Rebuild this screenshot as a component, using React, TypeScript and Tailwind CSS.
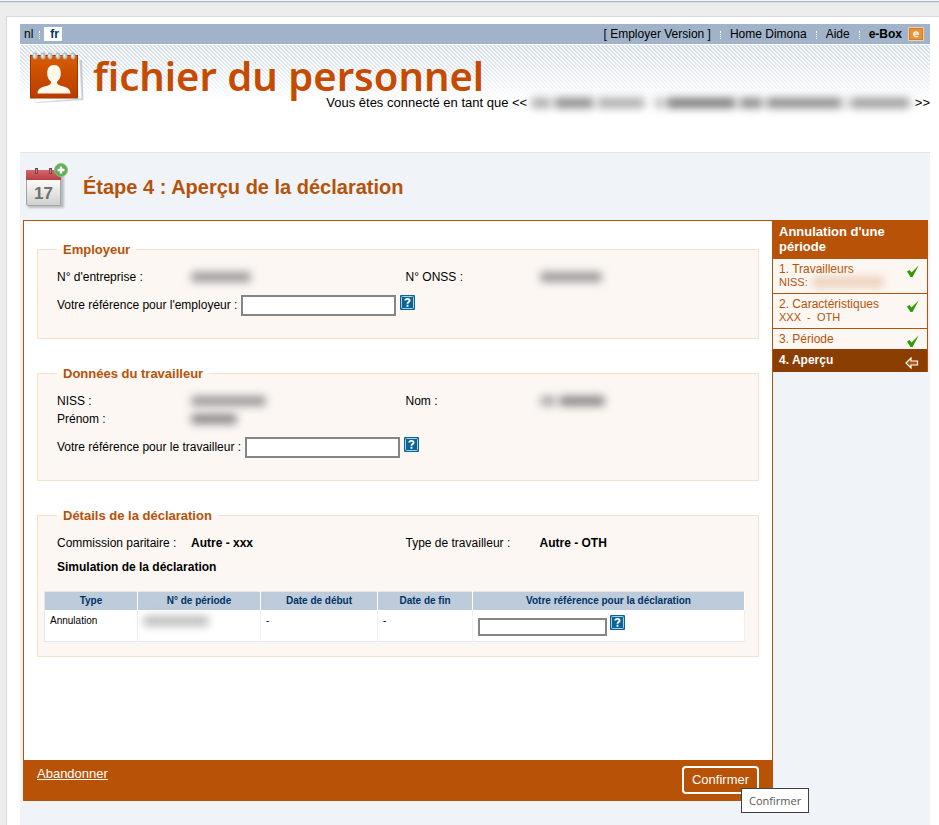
import { useId, type ReactNode } from "react";

const arial = "font-['Liberation_Sans',Arial,sans-serif]";

function Redacted({ words, className = "" }: { words: string[]; className?: string }) {
  return (
    <span aria-hidden="true" className={`flex items-center gap-[3px] ${className}`}>
      {words.map((word, i) => (
        <span key={i} className={`h-[10px] rounded-sm blur-[4px] ${word}`} />
      ))}
    </span>
  );
}

function HelpButton() {
  return (
    <button type="button" aria-label="Aide" className="block size-[15px] shrink-0 cursor-pointer">
      <svg viewBox="0 0 15 15" className="block size-[15px]">
        <rect width="15" height="15" rx="1" fill="#0a6496" />
        <rect x="1.5" y="1.5" width="12" height="12" rx="1" fill="none" stroke="#a9cfe2" />
        <path d="M5.300 5.600C5.300 3.300 9.800 3.200 9.600 5.600C9.500 7.100 7.600 7.100 7.500 8.800M7.500 9.800v1.900" fill="none" stroke="#fff" strokeWidth="1.900" />
      </svg>
    </button>
  );
}

function LogoIcon() {
  return (
    <svg viewBox="0 0 56 54" className="h-[54px] w-[56px] shrink-0" aria-hidden="true">
      <defs>
        <linearGradient id="pad" x1="0" y1="0" x2="0" y2="1">
          <stop offset="0" stopColor="#d65d00" />
          <stop offset="1" stopColor="#b93c00" />
        </linearGradient>
      </defs>
      <path d="M7 52L54.500 49L53 9L7 10z" fill="#a9afb4" opacity=".6" />
      <path d="M4 8H50.500L52.500 47.500L6 51.500z" fill="#fff" stroke="#dfe2e5" strokeWidth=".6" />
      <rect x="1.500" y="4.500" width="47" height="42.500" fill="url(#pad)" stroke="#a83200" />
      {[6, 14, 21, 29, 36, 44].map((x) => (
        <g key={x}>
          <ellipse cx={x} cy="5" rx="2.300" ry="3.200" fill="#c9c9c9" stroke="#999" strokeWidth=".6" />
          <path d={`M${x - 0.8} 3v3`} stroke="#f7f7f7" strokeWidth="1.200" />
        </g>
      ))}
      <path d="M25 14c-4.600 0-6.800 3.300-6.800 8c0 4.300 1.500 6.800 3.600 8.500c.6 1.500-.2 3-2.800 4C14.500 36 8.500 36.500 8.500 42.500h33C41.500 36.500 35.500 36 31 34.500c-2.600-1-3.400-2.500-2.800-4c2.100-1.700 3.600-4.200 3.600-8.500c0-4.700-2.200-8-6.800-8z" fill="#fff9ec" />
    </svg>
  );
}

function CalendarIcon() {
  return (
    <svg viewBox="0 0 46 50" className="h-[50px] w-[46px] shrink-0" aria-hidden="true">
      <defs>
        <linearGradient id="sheet" x1="0" y1="0" x2="0" y2="1">
          <stop offset="0.300" stopColor="#fbfaf5" />
          <stop offset="1" stopColor="#cfcfcf" />
        </linearGradient>
        <linearGradient id="band" x1="0" y1="0" x2="0" y2="1">
          <stop offset="0" stopColor="#d9666a" />
          <stop offset="1" stopColor="#b53f45" />
        </linearGradient>
        <filter id="soft">
          <feGaussianBlur stdDeviation="1.200" />
        </filter>
      </defs>
      <rect x="3" y="11" width="36" height="35" rx="1" fill="#7d858b" opacity=".5" filter="url(#soft)" />
      <rect x="1.500" y="8.500" width="34" height="35" rx="1" fill="url(#sheet)" stroke="#a3a3a3" />
      <rect x="1" y="8" width="35" height="10" fill="url(#band)" />
      <path d="M11.500 6v6M25.500 6v6" stroke="#7b4046" strokeWidth="3" />
      <path d="M11.500 7v4M25.500 7v4" stroke="#b08c90" />
      <text x="18.500" y="37" textAnchor="middle" fontFamily="Liberation Sans, sans-serif" fontWeight="bold" fontSize="17" fill="#6f6f6f">17</text>
      <circle cx="36" cy="8" r="6.500" fill="#5fae52" stroke="#8bc583" />
      <path d="M36 4.500v7M32.500 8h7" stroke="#fff" strokeWidth="2.400" />
    </svg>
  );
}

function Check() {
  return (
    <svg viewBox="0 0 14 14" className="mt-[2px] size-[14px] shrink-0" role="img" aria-label="Terminé">
      <path d="M1 7.500L3.500 6L5.500 8.500L12.800 1.200L6.500 13H4.500z" fill="#2f9b00" />
    </svg>
  );
}

function Section({ title, children }: { title: string; children: ReactNode }) {
  return (
    <fieldset className="min-w-0 border border-[#f8e1cb] bg-[#fcf7f3]">
      <legend className="ml-[19px] px-[6px] text-[13px] leading-[15px] font-bold text-[#b45309]">{title}</legend>
      {children}
    </fieldset>
  );
}

function Fields({ children }: { children: ReactNode }) {
  return (
    <dl className="grid grid-cols-[134px_1fr_134px_1fr] pt-[11px] pr-1 pl-[19px] leading-[18px]">{children}</dl>
  );
}

function ReferenceField({ label }: { label: string }) {
  const id = useId();
  return (
    <div className="mt-[9px] flex gap-1 pb-[22px] pl-[19px]">
      <label htmlFor={id} className="leading-[20px]">{label}</label>
      <input id={id} type="text" className="h-[21px] w-[155px] border-2 border-[#858585] bg-white px-1 outline-none" />
      <HelpButton />
    </div>
  );
}

function Divider() {
  return <span aria-hidden="true" className="mt-[2px] h-2 border-l border-dotted border-white" />;
}

export default function App() {
  return (
    <div className={`min-h-screen overflow-hidden bg-[#ededed] text-[12px] text-black ${arial}`}>
      <div className="h-4 border-t border-[#f5f8fa]">
        <div className="h-[2px] border-t border-[#a9b6c1] bg-[#dde2e0]" />
      </div>
      <div className="ml-[6px] flex min-h-[calc(100vh-16px)] flex-col border-t border-l border-[#d9d9d9] bg-white pt-[7px] pr-[9px] pl-[13px]">
        <header>
          <div className="flex h-5 items-center justify-between bg-[#a1b3c9] pr-[6px] pl-1">
            <nav aria-label="Langue" className="flex items-center leading-[14px]">
              <a href="#nl">nl</a>
              <span className="ml-[6px] flex"><Divider /></span>
              <a href="#fr" aria-current="true" className="ml-1 bg-white pr-[3px] pl-[6px] font-bold text-[#003366]">fr</a>
            </nav>
            <nav aria-label="Liens" className="flex items-center gap-[9px] leading-[14px]">
              <a href="#version">[ Employer Version ]</a>
              <Divider />
              <a href="#home">Home Dimona</a>
              <Divider />
              <a href="#aide">Aide</a>
              <Divider />
              <a href="#ebox" className="flex items-center gap-[6px] font-bold">
                e-Box
                <svg viewBox="0 0 16 14" className="h-[14px] w-4" aria-hidden="true">
                  <rect width="16" height="14" rx="1" fill="#f6cfa5" />
                  <rect x="1.500" y="1.500" width="13" height="11" fill="#e8923d" stroke="#d67c24" />
                  <path d="M5.800 7.200h4.500C10.300 4 5.800 4 5.800 7.200c0 2.900 3 2.900 4.300 1.800" fill="none" stroke="#fff" strokeWidth="1.300" />
                </svg>
              </a>
            </nav>
          </div>
          <div className="mt-px h-[107px] bg-[linear-gradient(to_bottom,transparent,white_56px)]">
            <div className="relative isolate">
              <div aria-hidden="true" className="absolute inset-x-0 top-0 -z-10 h-14 bg-[linear-gradient(45deg,#cfdae3_25%,#f8fafb_25%,#f8fafb_50%,#cfdae3_50%,#cfdae3_75%,#f8fafb_75%)] mask-[linear-gradient(to_bottom,black,transparent)] bg-size-[4px_4px]" />
              <div className="flex h-[50px] gap-2 pt-[6px] pl-[9px]">
                <LogoIcon />
                <h1 className="font-['Noto_Sans','Open_Sans',sans-serif] text-[40px] leading-[50px] font-semibold whitespace-nowrap text-[#c44b00]">fichier du personnel</h1>
              </div>
              <p className="flex justify-end text-[13px] leading-[16px]">
                <span className="whitespace-pre">Vous êtes connecté en tant que &lt;&lt; </span>
                <Redacted className="w-[384px]" words={["w-5 bg-[#aaa]", "w-10 bg-[#888]", "w-12 bg-[#aaa]", "w-1", "w-2 bg-[#aaa]", "w-[70px] bg-[#777]", "w-6 bg-[#888]", "w-[76px] bg-[#888]", "w-[2px] bg-[#aaa]", "w-[60px] bg-[#999]"]} />
                <span>&gt;&gt;</span>
              </p>
            </div>
          </div>
        </header>

        <main className="flex-1 border-t border-[#e2e6e9] bg-[#f0f4f8] pr-[2px] pb-6 pl-[3px]">
          <div className="flex h-[67px] items-center gap-3 pl-[2px]">
            <CalendarIcon />
            <h2 className="text-[20px] leading-[28px] font-bold text-[#b45309]">Étape 4 : Aperçu de la déclaration</h2>
          </div>

          <div className="flex items-start">
            <form className="min-w-0 flex-1 border border-[#b75206] bg-white" onSubmit={(e) => e.preventDefault()}>
              <div className="flex flex-col gap-[27px] px-[13px] pt-[21px] pb-[103px]">
                <Section title="Employeur">
                  <Fields>
                    <dt>N° d'entreprise :</dt>
                    <dd className="flex"><Redacted words={["w-[60px] bg-[#999]"]} /></dd>
                    <dt>N° ONSS :</dt>
                    <dd className="flex"><Redacted words={["w-[62px] bg-[#999]"]} /></dd>
                  </Fields>
                  <ReferenceField label="Votre référence pour l'employeur :" />
                </Section>

                <Section title="Données du travailleur">
                  <Fields>
                    <dt>NISS :</dt>
                    <dd className="flex"><Redacted words={["w-[75px] bg-[#999]"]} /></dd>
                    <dt>Nom :</dt>
                    <dd className="flex"><Redacted words={["w-4 bg-[#aaa]", "w-[46px] bg-[#888]"]} /></dd>
                    <dt>Prénom :</dt>
                    <dd className="flex"><Redacted words={["w-[46px] bg-[#888]"]} /></dd>
                  </Fields>
                  <ReferenceField label="Votre référence pour le travailleur :" />
                </Section>

                <Section title="Détails de la déclaration">
                  <Fields>
                    <dt>Commission paritaire :</dt>
                    <dd className="font-bold">Autre - xxx</dd>
                    <dt>Type de travailleur :</dt>
                    <dd className="font-bold">Autre - OTH</dd>
                  </Fields>
                  <h3 className="mt-[6px] pl-[19px] leading-[18px] font-bold">Simulation de la déclaration</h3>
                  <div className="mt-[15px] pr-[13px] pb-[14px] pl-[6px]">
                    <table className="w-full table-fixed border-collapse border border-[#e2e8ec] bg-white text-[10px]">
                      <colgroup>
                        <col className="w-[93px]" />
                        <col className="w-[123px]" />
                        <col className="w-[117px]" />
                        <col className="w-[95px]" />
                        <col />
                      </colgroup>
                      <thead>
                        <tr className="h-[18px] bg-[#becbda] text-[#003366]">
                          {["Type", "N° de période", "Date de début", "Date de fin", "Votre référence pour la déclaration"].map((t) => (
                            <th key={t} scope="col" className="border-r border-white p-0 leading-[15px] font-bold">{t}</th>
                          ))}
                        </tr>
                      </thead>
                      <tbody>
                        <tr className="h-8 align-top leading-[12px] *:border-r *:border-[#edf0f2] *:px-[5px] *:py-0 *:pt-[5px]">
                          <td>Annulation</td>
                          <td><Redacted className="h-3" words={["w-[66px] bg-[#bbb]"]} /></td>
                          <td>-</td>
                          <td>-</td>
                          <td>
                            <div className="flex gap-[3px]">
                              <input aria-label="Votre référence pour la déclaration" type="text" className="mt-[3px] h-[18px] w-[129px] border-2 border-[#858585] bg-white px-1 outline-none" />
                              <HelpButton />
                            </div>
                          </td>
                        </tr>
                      </tbody>
                    </table>
                  </div>
                </Section>
              </div>
              <footer className="flex h-10 items-start justify-between bg-[#b75206] px-[13px] pt-[6px] text-[13px] text-white">
                <a href="#abandonner" className="leading-[16px] underline">Abandonner</a>
                <div className="relative">
                  <button type="submit" className="h-7 w-[77px] rounded-[4px] border-2 border-white">Confirmer</button>
                  <div role="tooltip" className="absolute top-[22px] left-[59px] border border-[#404040] bg-white px-[7px] font-['Open_Sans',sans-serif] text-[11px] leading-[23px] text-[#575757]">Confirmer</div>
                </div>
              </footer>
            </form>

            <aside className="w-[155px] shrink-0 text-[#b45309]">
              <h3 className="bg-[#b75206] px-[6px] pt-1 pb-[5px] text-[13px] leading-[15px] font-bold text-white">Annulation d'une période</h3>
              <ol className="border-r border-[#b75206] bg-[#fcf7f3] leading-[14px]">
                <li className="flex h-[35px] justify-between border-b border-[#b75206] pt-[3px] pr-[7px] pl-[6px]">
                  <div>
                    <a href="#travailleurs">1. Travailleurs</a>
                    <p className="flex gap-1 text-[11px] leading-[12px]">NISS: <Redacted words={["w-[72px] bg-[#eccdb8]"]} /></p>
                  </div>
                  <Check />
                </li>
                <li className="flex h-[35px] justify-between border-b border-[#b75206] pt-[3px] pr-[7px] pl-[6px]">
                  <div>
                    <a href="#caracteristiques">2. Caractéristiques</a>
                    <p className="text-[11px] leading-[12px] whitespace-pre">XXX  -  OTH</p>
                  </div>
                  <Check />
                </li>
                <li className="flex h-5 justify-between pt-[3px] pr-[7px] pl-[6px]">
                  <a href="#periode">3. Période</a>
                  <Check />
                </li>
                <li aria-current="step" className="flex h-[23px] justify-between bg-[#8b3e02] pt-1 pr-[8px] pl-[6px] font-bold text-white">
                  4. Aperçu
                  <svg viewBox="0 0 14 12" className="mt-1 h-3 w-[14px]" aria-hidden="true">
                    <path d="M1 6L6 1V4H12.500V8H6V11z" fill="#b75206" stroke="#fff" strokeWidth="1.200" />
                  </svg>
                </li>
              </ol>
            </aside>
          </div>
        </main>
      </div>
    </div>
  );
}
